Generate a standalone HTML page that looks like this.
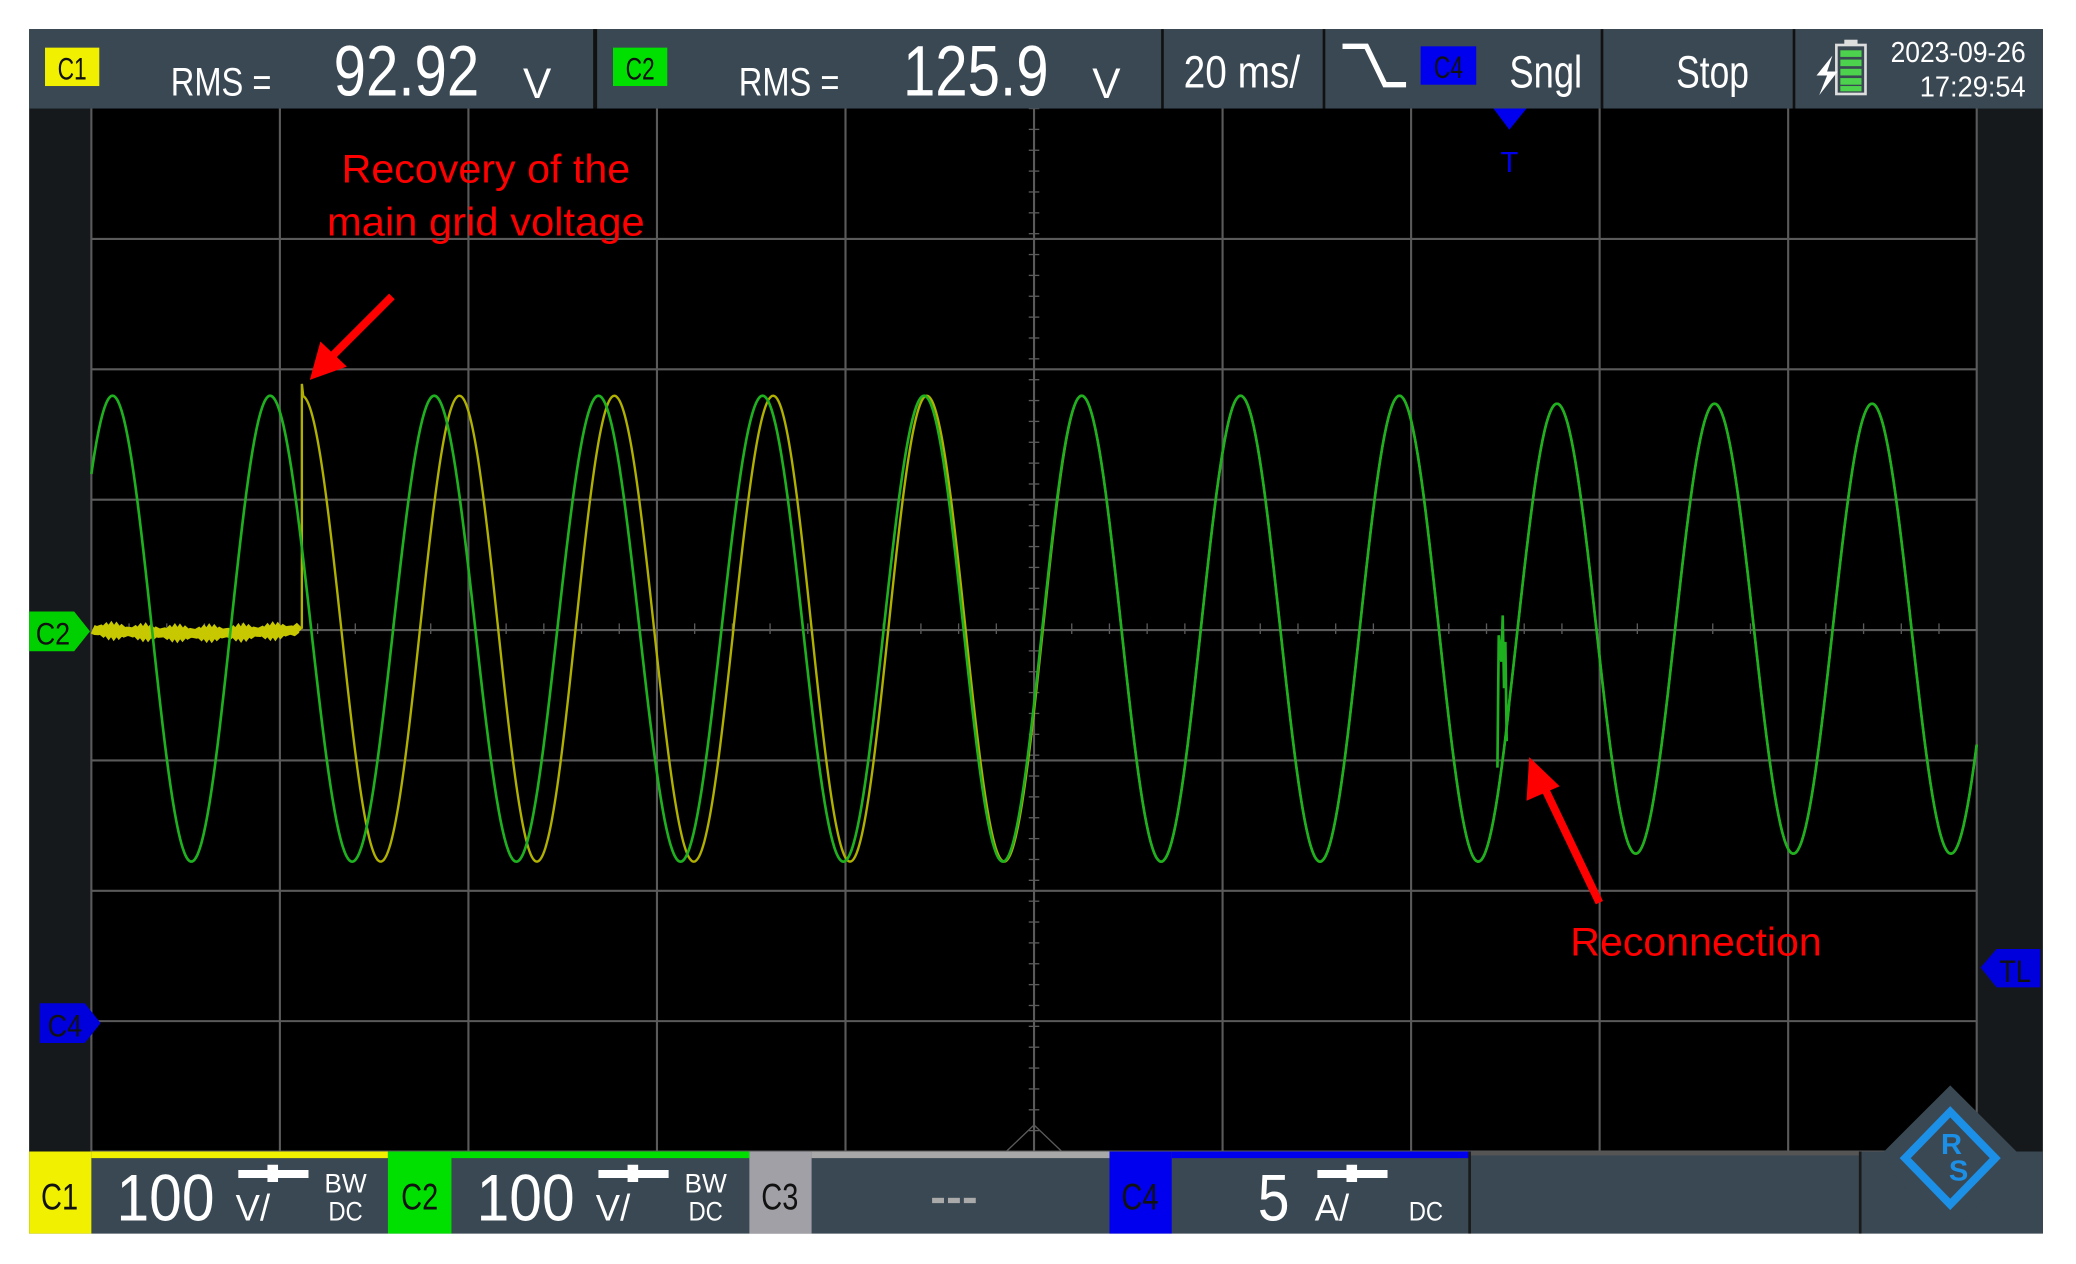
<!DOCTYPE html>
<html><head><meta charset="utf-8">
<style>
html,body{margin:0;padding:0;background:#fff;width:2076px;height:1264px;overflow:hidden}
svg{display:block}
text{font-family:"Liberation Sans Narrow","Liberation Sans",sans-serif}
</style></head>
<body>
<svg width="2076" height="1264" viewBox="0 0 1568 955" preserveAspectRatio="none" xmlns="http://www.w3.org/2000/svg">
<rect x="0" y="0" width="1568" height="955" fill="#fff"/>
<rect x="22" y="22" width="1521" height="910" fill="#16191c"/>
<rect x="69" y="82" width="1424" height="788" fill="#000"/>
<g id="grid" stroke="#5a5a5a" stroke-width="1.6"></g>
<path id="yflat" fill="none" stroke="#c8c800" stroke-width="7"/>
<path id="yellow" fill="none" stroke="#b0b000" stroke-width="1.8"/>
<path id="green" fill="none" stroke="#1fb01f" stroke-width="2"/>
<path d="M1131 580 L1132 480 L1134 500 L1135 465 L1136 520 L1137 485 L1138 560" fill="none" stroke="#1fb01f" stroke-width="2"/>

<rect x="22" y="22" width="1521" height="60" fill="#3a4853"/>
<g fill="#111"><rect x="448" y="22" width="3" height="60"/><rect x="877" y="22" width="2" height="60"/><rect x="999" y="22" width="2" height="60"/><rect x="1209" y="22" width="2" height="60"/><rect x="1354" y="22" width="2" height="60"/></g>
<rect x="34" y="36" width="41" height="29" fill="#f0f000"/>
<text x="54.5" y="60" font-size="24" text-anchor="middle" fill="#111" textLength="22" lengthAdjust="spacingAndGlyphs">C1</text>
<text x="129" y="72" font-size="30" fill="#fff" textLength="76" lengthAdjust="spacingAndGlyphs">RMS =</text>
<text x="252" y="72" font-size="54" fill="#fff" textLength="110" lengthAdjust="spacingAndGlyphs">92.92</text>
<text x="395" y="74" font-size="32" fill="#fff">V</text>
<rect x="463" y="36" width="41" height="29" fill="#00e000"/>
<text x="483.5" y="60" font-size="24" text-anchor="middle" fill="#111" textLength="22" lengthAdjust="spacingAndGlyphs">C2</text>
<text x="558" y="72" font-size="30" fill="#fff" textLength="76" lengthAdjust="spacingAndGlyphs">RMS =</text>
<text x="682" y="72" font-size="54" fill="#fff" textLength="110" lengthAdjust="spacingAndGlyphs">125.9</text>
<text x="825" y="74" font-size="32" fill="#fff">V</text>
<text x="894" y="66" font-size="34" fill="#fff" textLength="88" lengthAdjust="spacingAndGlyphs">20 ms/</text>
<path d="M1014 35 H1032 L1046 64 H1062" fill="none" stroke="#fff" stroke-width="4"/>
<rect x="1073" y="35" width="42" height="29" fill="#0000ee"/>
<text x="1094" y="59" font-size="24" text-anchor="middle" fill="#111" textLength="22" lengthAdjust="spacingAndGlyphs">C4</text>
<text x="1140" y="66" font-size="34" fill="#fff" textLength="55" lengthAdjust="spacingAndGlyphs">Sngl</text>
<text x="1266" y="66" font-size="34" fill="#fff" textLength="55" lengthAdjust="spacingAndGlyphs">Stop</text>
<rect x="1387" y="34" width="22" height="37" fill="none" stroke="#ddd" stroke-width="2"/>
<rect x="1393" y="30" width="10" height="4" fill="#ddd"/>
<g fill="#4cd24c"><rect x="1390" y="38" width="16" height="5"/><rect x="1390" y="45" width="16" height="5"/><rect x="1390" y="52" width="16" height="5"/><rect x="1390" y="59" width="16" height="5"/><rect x="1390" y="65" width="16" height="4"/></g>
<path d="M1384 42 L1372 57 H1380 L1374 72 L1388 54 H1380 Z" fill="#fff"/>
<text x="1530" y="47" font-size="22" text-anchor="end" fill="#fff" textLength="102" lengthAdjust="spacingAndGlyphs">2023-09-26</text>
<text x="1530" y="73" font-size="22" text-anchor="end" fill="#fff" textLength="80" lengthAdjust="spacingAndGlyphs">17:29:54</text>

<path d="M1128 82 H1153 L1140 98 Z" fill="#0000ee"/>
<text x="1140" y="130" font-size="22" text-anchor="middle" fill="#0000ee">T</text>

<path d="M22 462 H56 L68 477 L56 492 H22 Z" fill="#00d000"/>
<text x="40" y="487" font-size="24" text-anchor="middle" fill="#111" textLength="26" lengthAdjust="spacingAndGlyphs">C2</text>
<path d="M30 758 H64 L76 773 L64 788 H30 Z" fill="#0000dd"/>
<text x="49" y="783" font-size="24" text-anchor="middle" fill="#111" textLength="26" lengthAdjust="spacingAndGlyphs">C4</text>
<path d="M1541 717 H1508 L1496 731 L1508 746 H1541 Z" fill="#0000dd"/>
<text x="1522" y="742" font-size="24" text-anchor="middle" fill="#111" textLength="24" lengthAdjust="spacingAndGlyphs">TL</text>

<text x="367" y="138" font-size="30" text-anchor="middle" fill="#ff0000" font-family="Liberation Sans" textLength="218" lengthAdjust="spacingAndGlyphs">Recovery of the</text>
<text x="367" y="178" font-size="30" text-anchor="middle" fill="#ff0000" font-family="Liberation Sans" textLength="240" lengthAdjust="spacingAndGlyphs">main grid voltage</text>
<line x1="296" y1="224" x2="250" y2="270" stroke="#ff0000" stroke-width="6"/>
<path d="M234 287 L242 258 L262 277 Z" fill="#ff0000"/>
<text x="1281" y="722" font-size="30" text-anchor="middle" fill="#ff0000" font-family="Liberation Sans" textLength="190" lengthAdjust="spacingAndGlyphs">Reconnection</text>
<line x1="1208" y1="682" x2="1165" y2="592" stroke="#ff0000" stroke-width="6"/>
<path d="M1155 572 L1153 605 L1178 594 Z" fill="#ff0000"/>

<rect x="22" y="870" width="1521" height="62" fill="#3a4853"/>
<rect x="22" y="870" width="47" height="62" fill="#f0f000"/>
<rect x="69" y="870" width="224" height="5" fill="#f0f000"/>
<rect x="293" y="870" width="48" height="62" fill="#00e000"/>
<rect x="341" y="870" width="225" height="5" fill="#00e000"/>
<rect x="566" y="870" width="47" height="62" fill="#a0a0a6"/>
<rect x="613" y="870" width="225" height="5" fill="#a8a8a8"/>
<rect x="838" y="870" width="47" height="62" fill="#0000ee"/>
<rect x="885" y="870" width="225" height="5" fill="#0000ee"/>
<rect x="1110" y="870" width="295" height="3" fill="#555"/>
<rect x="1109" y="870" width="2" height="62" fill="#1a1a1a"/>
<rect x="1404" y="870" width="2" height="62" fill="#1a1a1a"/>
<text x="45" y="914" font-size="28" text-anchor="middle" fill="#111" textLength="28" lengthAdjust="spacingAndGlyphs">C1</text>
<text x="317" y="914" font-size="28" text-anchor="middle" fill="#111" textLength="28" lengthAdjust="spacingAndGlyphs">C2</text>
<text x="589" y="914" font-size="28" text-anchor="middle" fill="#111" textLength="28" lengthAdjust="spacingAndGlyphs">C3</text>
<text x="861" y="914" font-size="28" text-anchor="middle" fill="#111" textLength="28" lengthAdjust="spacingAndGlyphs">C4</text>
<g fill="#fff">
<text x="88" y="922" font-size="50" textLength="74" lengthAdjust="spacingAndGlyphs">100</text>
<text x="178" y="922" font-size="28" textLength="26" lengthAdjust="spacingAndGlyphs">V/</text>
<text x="245" y="901" font-size="20" textLength="32" lengthAdjust="spacingAndGlyphs">BW</text>
<text x="248" y="922" font-size="20" textLength="26" lengthAdjust="spacingAndGlyphs">DC</text>
<text x="360" y="922" font-size="50" textLength="74" lengthAdjust="spacingAndGlyphs">100</text>
<text x="450" y="922" font-size="28" textLength="26" lengthAdjust="spacingAndGlyphs">V/</text>
<text x="517" y="901" font-size="20" textLength="32" lengthAdjust="spacingAndGlyphs">BW</text>
<text x="520" y="922" font-size="20" textLength="26" lengthAdjust="spacingAndGlyphs">DC</text>
<text x="950" y="922" font-size="50" textLength="24" lengthAdjust="spacingAndGlyphs">5</text>
<text x="993" y="922" font-size="28" textLength="26" lengthAdjust="spacingAndGlyphs">A/</text>
<text x="1064" y="922" font-size="20" textLength="26" lengthAdjust="spacingAndGlyphs">DC</text>
</g>
<g fill="#aaa"><rect x="704" y="905" width="9" height="4"/><rect x="716" y="905" width="9" height="4"/><rect x="728" y="905" width="9" height="4"/></g>
<g fill="#fff">
<path d="M180 884 H202 V880 H210 V884 H233 V890 H210 V893 H202 V890 H180 Z"/>
<path d="M452 884 H474 V880 H482 V884 H505 V890 H482 V893 H474 V890 H452 Z"/>
<path d="M995 884 H1017 V880 H1025 V884 H1048 V890 H1025 V893 H1017 V890 H995 Z"/>
</g>
<path d="M1473 820 L1528 875 L1473 932 L1418 875 Z" fill="#3a4853"/>
<path d="M1473 840 L1507 875 L1473 910 L1439 875 Z" fill="none" stroke="#1c8fe6" stroke-width="6"/>
<text x="1466" y="872" font-size="22" fill="#1c8fe6" font-family="Liberation Sans" font-weight="bold">R</text>
<text x="1472" y="892" font-size="22" fill="#1c8fe6" font-family="Liberation Sans" font-weight="bold">S</text>
</svg>
<script>
(function(){
var ns="http://www.w3.org/2000/svg",g=document.getElementById('grid');
function ln(x1,y1,x2,y2,w){var l=document.createElementNS(ns,'line');l.setAttribute('x1',x1);l.setAttribute('y1',y1);l.setAttribute('x2',x2);l.setAttribute('y2',y2);if(w)l.setAttribute('stroke-width',w);g.appendChild(l);}
for(var i=0;i<=10;i++){var x=69+i*142.4;ln(x,82,x,870);}
for(var j=1;j<=8;j++){var y=82+j*98.5;ln(69,y,1493,y);}
for(var k=0;k<50;k++){var y=82+k*15.76;ln(777,y,785,y,1);}
for(var k=0;k<50;k++){var x=69+k*28.48;ln(x,471,x,479,1);}
ln(760,870,781,850,1);ln(781,850,802,870,1);
function phase(x,pk){
  if(x<=pk[0])return (x-pk[0])/119;
  for(var i=0;i<pk.length-1;i++){if(x<=pk[i+1])return i+(x-pk[i])/(pk[i+1]-pk[i]);}
  return pk.length-1+(x-pk[pk.length-1])/119;
}
var gp=[85,204,328,452,576,698,817,937,1057,1176,1295,1414];
var yp=[85,228,347,464,584,700,817,937,1057,1176,1295,1414];
var C=475;
function amp(x){return x<1140?176:170;}
var s="";
for(var x=69;x<=1493;x+=1){var y=C-amp(x)*Math.cos(2*Math.PI*phase(x,gp));s+=(x==69?"M":"L")+x+" "+y.toFixed(1);}
document.getElementById('green').setAttribute('d',s);
var t="M228 475 L228 290";
for(var x=229;x<=1493;x+=1){var y=C-amp(x)*Math.cos(2*Math.PI*phase(x,yp));t+="L"+x+" "+y.toFixed(1);}
document.getElementById('yellow').setAttribute('d',t);
var f="";
for(var x=70;x<=227;x+=2){var y=476+1.5*Math.sin(x*1.7)+2.5*Math.sin((x-70)/157*Math.PI);f+=(x==70?"M":"L")+x+" "+y.toFixed(1);}
document.getElementById('yflat').setAttribute('d',f);
})();
</script>
</body></html>
